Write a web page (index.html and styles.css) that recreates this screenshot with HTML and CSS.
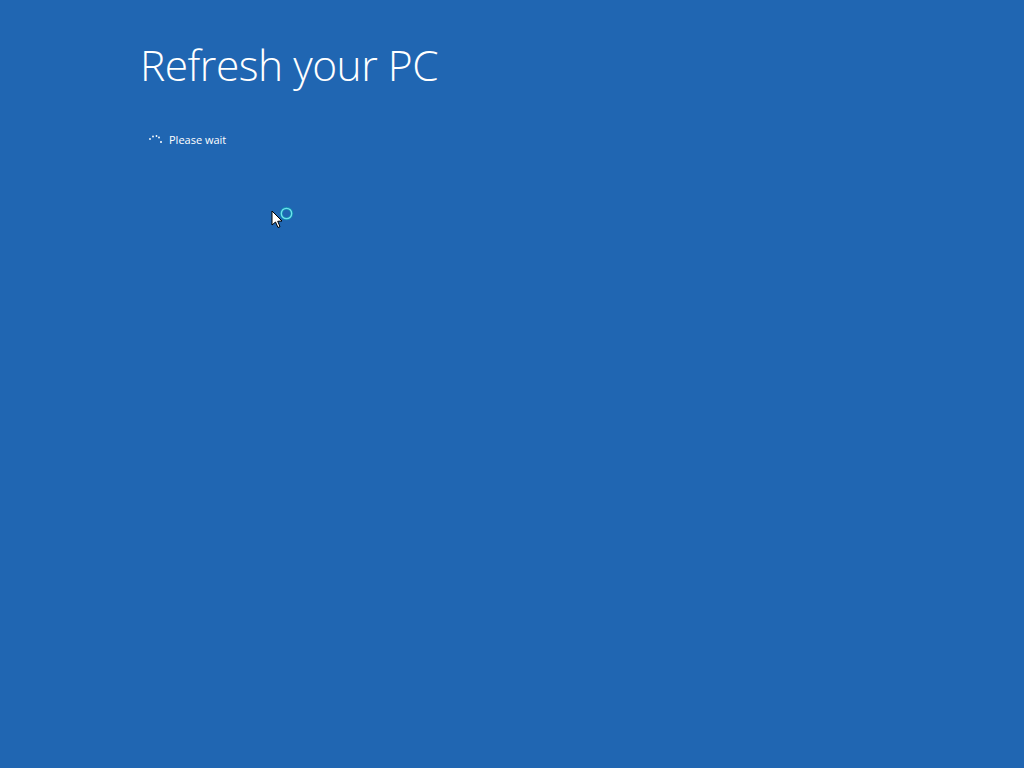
FILE: index.html
```html
<!DOCTYPE html>
<html lang="en">
<head>
  <meta charset="UTF-8">
  <title>Refresh your PC</title>
  <link rel="stylesheet" href="styles.css">
</head>
<body>

  <main class="screen">
    <h1 class="title">Refresh your PC</h1>

    <div class="status">
      <svg class="spinner" width="16" height="12" viewBox="0 0 16 12">
        <circle cx="2" cy="5" r="0.9" fill="#fff" />
        <circle cx="5" cy="2.5" r="0.9" fill="#fff" />
        <circle cx="8.5" cy="2" r="0.9" fill="#fff" />
        <circle cx="11" cy="3.5" r="0.9" fill="#fff" />
        <circle cx="13" cy="8" r="1" fill="#fff" />
      </svg>
      <span>Please wait</span>
    </div>
  </main>

  <!-- busy pointer -->
  <svg class="cursor" width="28" height="28" viewBox="0 0 28 28">
    <circle cx="15.5" cy="6.5" r="5.2" fill="none" stroke="#138fb0" stroke-width="3" />
    <circle cx="15.5" cy="6.5" r="5.2" fill="none" stroke="#6fe0ee" stroke-width="1.3" />
    <path d="M1 4 L1 18 L4.5 15 L7 20.5 L9 19.6 L6.7 14.3 L11 14 Z" fill="#fff" stroke="#000" stroke-width="1" stroke-linejoin="round" />
  </svg>

</body>
</html>
```

FILE: styles.css
```css
html, body {
  height: 100%;
}

body {
  margin: 0;
  background: #2066b2;
  color: #fff;
  font-family: "Open Sans", "Noto Sans", sans-serif;
  overflow: hidden;
}

.screen {
  padding: 35px 0 0 140px;
}

.title {
  margin: 0;
  font-weight: 300;
  font-size: 42.5px;
  line-height: 60px;
  letter-spacing: -0.5px;
}

.status {
  display: flex;
  align-items: center;
  gap: 5px;
  margin: 37px 0 0 8px;
  font-size: 11px;
}

.spinner {
  display: block;
}

.cursor {
  position: absolute;
  left: 271px;
  top: 207px;
}
```
